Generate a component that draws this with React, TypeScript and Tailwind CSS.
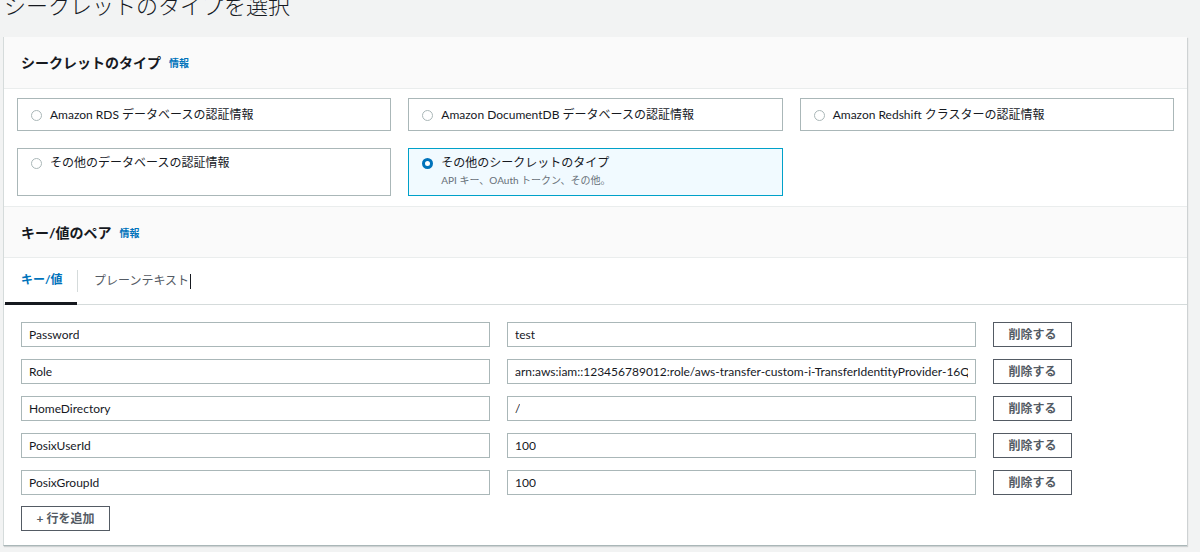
import React from 'react';

const font = { fontFamily: 'Lato, "Noto Sans CJK JP", sans-serif' };

const options = [
  { label: 'Amazon RDS データベースの認証情報' },
  { label: 'Amazon DocumentDB データベースの認証情報' },
  { label: 'Amazon Redshift クラスターの認証情報' },
  { label: 'その他のデータベースの認証情報' },
  { label: 'その他のシークレットのタイプ', sub: 'API キー、OAuth トークン、その他。', selected: true },
];

const rows = [
  ['Password', 'test'],
  ['Role', 'arn:aws:iam::123456789012:role/aws-transfer-custom-i-TransferIdentityProvider-16QZ9XAMPLE'],
  ['HomeDirectory', '/'],
  ['PosixUserId', '100'],
  ['PosixGroupId', '100'],
];

const Radio: React.FC<{ checked?: boolean }> = ({ checked }) =>
  checked ? (
    <span className="mt-[3px] w-[11px] h-[11px] rounded-full border-[3px] border-[#0073bb] bg-white shrink-0" />
  ) : (
    <span className="mt-[3px] w-[11px] h-[11px] rounded-full border border-[#aab7b8] bg-white shrink-0" />
  );

const SectionHeader: React.FC<{ title: string; top?: boolean }> = ({ title, top }) => (
  <div
    className={
      'h-[52px] bg-[#fafafa] flex items-center px-[17px] border-b border-[#eaeded] ' +
      (top ? 'border-t' : '')
    }
  >
    <span className="text-[14px] font-bold text-[#16191f]">{title}</span>
    <span className="ml-[8px] mt-[2px] text-[10px] font-bold text-[#0073bb]">情報</span>
  </div>
);

const Field: React.FC<{ text: string; w: string }> = ({ text, w }) => (
  <div
    className={
      w +
      ' h-[25px] border border-[#aab7b8] bg-white px-[7px] flex items-center text-[12px] text-[#16191f] whitespace-nowrap overflow-hidden'
    }
  >
    <span className="block overflow-hidden">{text}</span>
  </div>
);

const Btn: React.FC<{ text: string; w: string }> = ({ text, w }) => (
  <div
    className={
      w +
      ' h-[25px] border border-[#545b64] bg-white flex items-center justify-center text-[12px] font-bold text-[#545b64]'
    }
  >
    {text}
  </div>
);

export default function App() {
  return (
    <div className="bg-[#f2f3f3] h-[552px] overflow-hidden" style={font}>
      <h1 className="h-[37px] pl-[4px] -mt-[9px] text-[22px] leading-[30px] text-[#16191f] font-light whitespace-nowrap">
        シークレットのタイプを選択
      </h1>
      <div className="mt-[9px] ml-[3px] w-[1184px] bg-white border-l border-[#d5dbdb] shadow-[1px_1px_1px_rgba(0,28,36,0.15)] border-b border-b-[#aab7b8]">
        <SectionHeader title="シークレットのタイプ" />
        <div className="pt-[9px] pb-[10px] pl-[13px] pr-[13px] grid grid-cols-3 gap-x-[17px] gap-y-[17px]">
          {options.map((o, i) => (
            <div
              key={i}
              className={
                'flex items-start gap-[8px] pl-[13px] border ' +
                (i < 3 ? 'h-[33px] pt-[8px] ' : 'h-[48px] pt-[6px] ') +
                (o.selected ? 'bg-[#f1faff] border-[#00a1c9]' : 'bg-white border-[#aab7b8]')
              }
            >
              <Radio checked={o.selected} />
              <div className="leading-[16px]">
                <div className="text-[12px] text-[#16191f]">{o.label}</div>
                {o.sub && <div className="text-[10px] text-[#687078] mt-[1px]">{o.sub}</div>}
              </div>
            </div>
          ))}
        </div>
        <SectionHeader title="キー/値のペア" top />
        <div className="h-[47px] flex items-stretch border-b border-[#d5dbdb]">
          <div className="ml-[1px] w-[72px] flex items-center pl-[16px] text-[12px] font-bold text-[#0073bb] border-b-[3px] border-[#16191f] -mb-[1px]">
            キー/値
          </div>
          <div className="my-[12px] w-px bg-[#d5dbdb]" />
          <div className="flex items-center pl-[16px] text-[12px] text-[#545b64]">
            プレーンテキスト
            <span className="ml-[1px] w-px h-[15px] bg-[#16191f]" />
          </div>
        </div>
        <div className="pt-[17px] pl-[17px] flex flex-col gap-[12px]">
          {rows.map(([k, v]) => (
            <div key={k} className="flex items-center gap-[17px]">
              <Field text={k} w="w-[469px]" />
              <Field text={v} w="w-[469px]" />
              <Btn text="削除する" w="w-[79px]" />
            </div>
          ))}
          <div className="mt-[-1px] pb-[14px]">
            <Btn text="+ 行を追加" w="w-[89px]" />
          </div>
        </div>
      </div>
    </div>
  );
}
